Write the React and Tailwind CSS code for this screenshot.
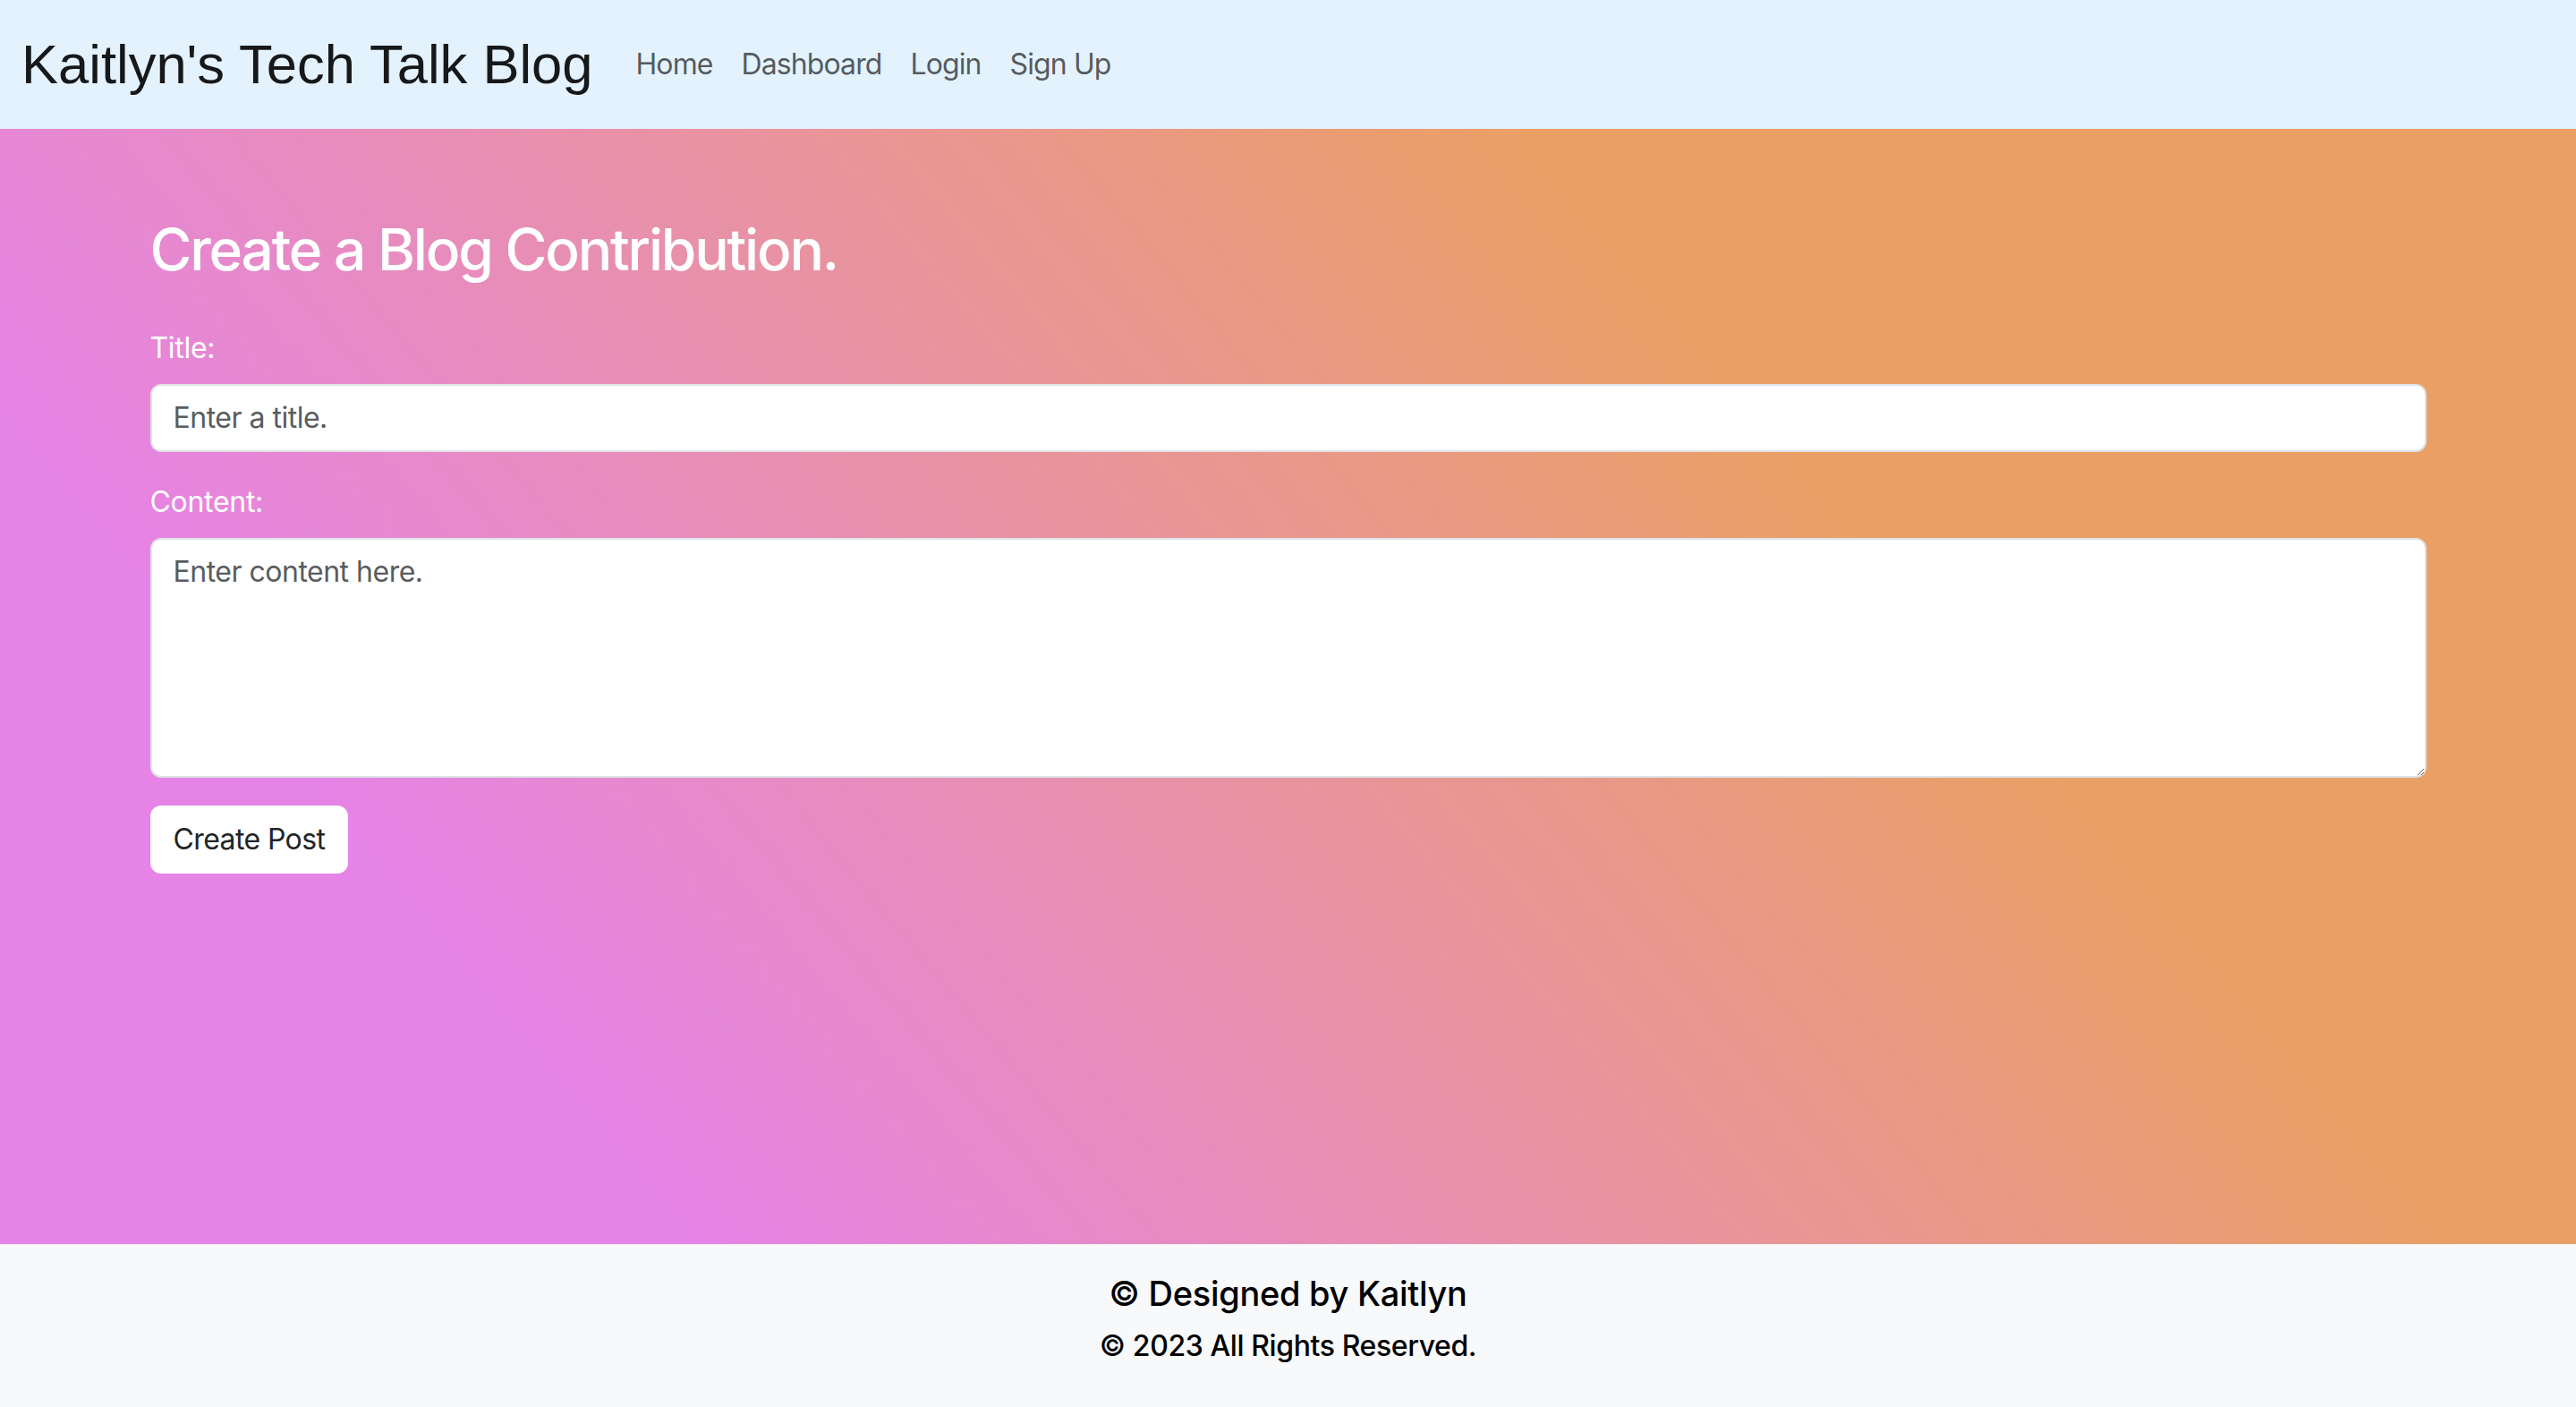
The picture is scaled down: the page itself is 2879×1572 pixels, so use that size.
import { useState } from "react";

const NavBar = () => {
    const links = ["Home", "Dashboard", "Login", "Sign Up"];

    return (
        <nav className="h-[144px] shrink-0 bg-[#e3f2fd] flex items-center px-[24px]">
            <a href="#" className="font-['Liberation_Sans',Arial,sans-serif] text-[61.5px] leading-[90px] text-black/90 mr-[32px]">
                Kaitlyn's Tech Talk Blog
            </a>
            <div className="flex flex-row">
                {links.map((l) => (
                    <a key={l} href="#" className="px-[16px] py-[16px] text-[32px] leading-[48px] tracking-[-0.9px] text-black/65">
                        {l}
                    </a>
                ))}
            </div>
        </nav>
    );
};

const App = () => {
    const [title, setTitle] = useState("");
    const [content, setContent] = useState("");

    return (
        <div className="min-h-screen flex flex-col font-['Inter','Noto_Sans',sans-serif]">
            <NavBar />

            <main className="flex-1 bg-[linear-gradient(50deg,#e683e6_20%,#eaa065_70%)]">
                <div className="max-w-[2640px] mx-auto px-[48px] pt-[96px]">
                    <h2 className="text-[64px] leading-[77px] font-medium tracking-[-2.2px] text-white mb-[48px]">
                        Create a Blog Contribution.
                    </h2>

                    <form onSubmit={(e) => e.preventDefault()}>
                        <div className="mb-[32px]">
                            <label className="block text-[32px] leading-[48px] tracking-[-0.3px] text-white mb-[16px]">Title:</label>
                            <input
                                placeholder="Enter a title."
                                className="block w-full bg-white border-2 border-[#dee2e6] rounded-[12px] px-[24px] py-[12px] text-[32px] leading-[48px] tracking-[-0.5px] text-[#212529] placeholder:text-[#595c5f] outline-none"
                                value={title}
                                onChange={(e) => setTitle(e.target.value)}
                            />
                        </div>

                        <div className="mb-[31px]">
                            <label className="block text-[32px] leading-[48px] tracking-[-0.3px] text-white mb-[16px]">Content:</label>
                            <textarea
                                rows={5}
                                placeholder="Enter content here."
                                className="block w-full h-[268px] bg-white border-2 border-[#dee2e6] rounded-[12px] px-[24px] py-[12px] text-[32px] leading-[48px] tracking-[-0.5px] text-[#212529] placeholder:text-[#595c5f] outline-none"
                                value={content}
                                onChange={(e) => setContent(e.target.value)}
                            />
                        </div>

                        <button type="submit" className="bg-white text-[#212529] border-2 border-white rounded-[12px] px-[24px] py-[12px] text-[32px] leading-[48px] tracking-[-0.6px]">
                            Create Post
                        </button>
                    </form>
                </div>
            </main>

            <footer className="h-[182px] shrink-0 bg-[#f8f9fa] flex flex-col items-center pt-[31px] text-black">
                <h5 className="text-[38px] leading-[48px] font-medium tracking-[-0.3px] mb-[16px]">© Designed by Kaitlyn</h5>
                <p className="text-[32px] leading-[38px] font-medium tracking-[-0.4px]">© 2023 All Rights Reserved.</p>
            </footer>
        </div>
    );
};

export default App;
